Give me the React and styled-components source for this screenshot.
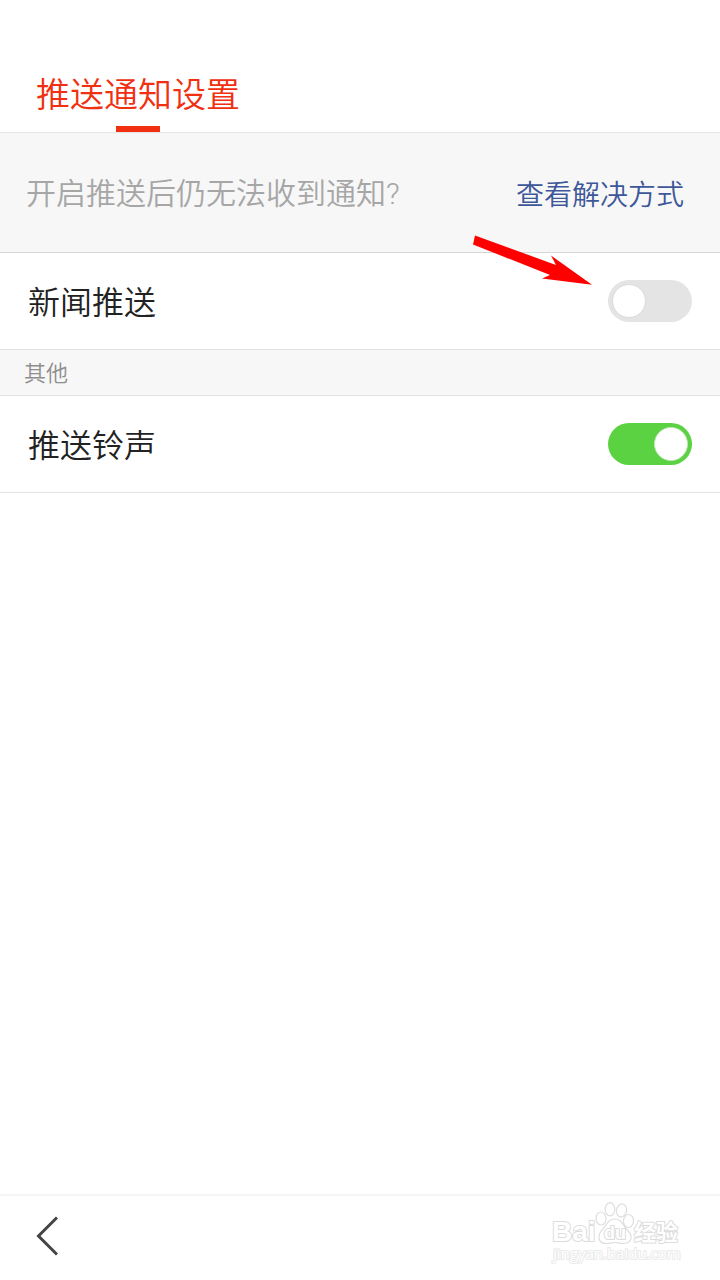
import React, { useState } from "react";
import styled, { createGlobalStyle } from "styled-components";

const App = () => {
  const [newsPush, setNewsPush] = useState(false);
  const [pushSound, setPushSound] = useState(true);

  return (
    <>
      <GlobalStyle />
      <StPage>
        <StHeader>
          <StTitle>推送通知设置</StTitle>
        </StHeader>
        <StMain>
          <StNotice>
            <StNoticeText>开启推送后仍无法收到通知?</StNoticeText>
            <StLink href="#help">查看解决方式</StLink>
          </StNotice>
          <StRow>
            <StLabel htmlFor="news-push">新闻推送</StLabel>
            <StSwitch
              id="news-push"
              type="checkbox"
              role="switch"
              checked={newsPush}
              onChange={(e) => setNewsPush(e.target.checked)}
            />
            <StArrow viewBox="0 0 120 50" aria-hidden="true">
              <path
                d="M3 -0.5L84 29L79 19.5L120 48.8L70 42.5L78 39L1 8.5Z"
                fill="#ff0000"
              />
            </StArrow>
          </StRow>
          <StSectionTitle>其他</StSectionTitle>
          <StRow>
            <StLabel htmlFor="push-sound">推送铃声</StLabel>
            <StSwitch
              id="push-sound"
              type="checkbox"
              role="switch"
              checked={pushSound}
              onChange={(e) => setPushSound(e.target.checked)}
            />
          </StRow>
        </StMain>
        <StFooter>
          <StBackButton type="button" aria-label="返回">
            <svg width="24" height="40" viewBox="0 0 24 40" fill="none">
              <path d="M23 1.5L4.5 20L23 38.5" stroke="#444" strokeWidth="3" />
            </svg>
          </StBackButton>
          <BaiduLogo />
        </StFooter>
      </StPage>
    </>
  );
};

const BaiduLogo = () => (
  <StLogo viewBox="0 0 132 68" role="img" aria-label="Baidu经验">
    <g fill="#fff" stroke="#dedede" strokeWidth="1.2">
      <ellipse cx="49" cy="16.5" rx="5" ry="6.5" transform="rotate(-4 49 16.5)" />
      <ellipse cx="58" cy="7.2" rx="4.8" ry="6.6" />
      <ellipse cx="69.5" cy="8.5" rx="5" ry="6.6" transform="rotate(12 69.5 8.5)" />
      <ellipse cx="76.5" cy="19" rx="5" ry="6.5" transform="rotate(4 76.5 19)" />
      <path d="M63 17C70 17 71 24 76 29C82 35 79 41.5 71 41.5C67 41.5 66 40.5 63 40.5C60 40.5 58 41.5 54 41.5C46 41.5 45 34 50 28C55 23 56 17 63 17Z" />
    </g>
    <StLogoText x="0" y="39" $size={28}>Bai</StLogoText>
    <StLogoText x="52" y="37" $size={18}>du</StLogoText>
    <StLogoText x="82" y="38" $size={22}>经验</StLogoText>
    <StLogoUrl x="1" y="57">jingyan.baidu.com</StLogoUrl>
  </StLogo>
);

const GlobalStyle = createGlobalStyle`
  *,
  *::before,
  *::after {
    box-sizing: border-box;
  }

  body {
    margin: 0;
    background-color: #fff;
    font-family: "Noto Sans CJK SC", sans-serif;
    font-weight: 350;
  }
`;

const StPage = styled.div`
  min-height: 100vh;
  display: flex;
  flex-direction: column;
`;

const StHeader = styled.header`
  display: flex;
  padding: 62px 36px 0;
  border-bottom: 1px solid #e4e4e4;
`;

const StTitle = styled.h1`
  display: flex;
  flex-direction: column;
  align-items: center;
  gap: 2px;
  margin: 0;
  color: #f03010;
  font-size: 34px;
  font-weight: 350;
  line-height: 62px;

  &::after {
    content: "";
    width: 44px;
    height: 6px;
    background-color: #f03010;
  }
`;

const StMain = styled.main`
  flex: 1;
`;

const StNotice = styled.div`
  display: flex;
  align-items: center;
  justify-content: space-between;
  height: 120px;
  padding: 0 36px 0 26px;
  border-bottom: 1px solid #d6d6d6;
  background-color: #f7f7f7;
`;

const StNoticeText = styled.p`
  margin: 0;
  padding-bottom: 4px;
  color: #a6a6a6;
  font-family: Roboto, "Noto Sans CJK SC", sans-serif;
  font-size: 30px;
`;

const StLink = styled.a`
  color: #3e5799;
  font-size: 28px;
  text-decoration: none;
`;

const StRow = styled.div`
  position: relative;
  display: flex;
  align-items: center;
  justify-content: space-between;
  height: 97px;
  padding: 0 28px;
  border-bottom: 1px solid #e2e2e2;
`;

const StLabel = styled.label`
  padding-bottom: 2px;
  color: #222;
  font-size: 32px;
`;

const StSwitch = styled.input`
  appearance: none;
  display: flex;
  align-items: center;
  justify-content: ${({ checked }) => (checked ? "flex-end" : "flex-start")};
  width: 84px;
  height: 42px;
  margin: 0;
  padding: 0 4px;
  border-radius: 21px;
  background-color: ${({ checked }) => (checked ? "#5ad242" : "#e4e4e4")};
  cursor: pointer;

  &::before {
    content: "";
    width: 34px;
    height: 34px;
    border: 1px solid ${({ checked }) => (checked ? "#c4e6bd" : "#dadada")};
    border-radius: 50%;
    background-color: #fff;
  }
`;

// 指向开关的箭头
const StArrow = styled.svg`
  position: absolute;
  top: -17px;
  right: 128px;
  width: 120px;
  height: 50px;
  overflow: visible;
  pointer-events: none;
`;

const StSectionTitle = styled.h2`
  margin: 0;
  padding: 0 24px 2px;
  border-bottom: 1px solid #e2e2e2;
  background-color: #f7f7f7;
  color: #8e8e8e;
  font-size: 22px;
  font-weight: 350;
  line-height: 43px;
`;

const StFooter = styled.footer`
  display: flex;
  align-items: center;
  justify-content: space-between;
  height: 86px;
  padding: 0 36px 4px 34px;
  border-top: 2px solid #f5f5f5;
`;

const StBackButton = styled.button`
  display: flex;
  padding: 0;
  border: none;
  background: none;
  cursor: pointer;
`;

const StLogo = styled.svg`
  width: 132px;
  height: 68px;
  overflow: visible;
`;

const StLogoText = styled.text`
  fill: #fff;
  stroke: #dcdcdc;
  stroke-width: 2px;
  stroke-linejoin: round;
  paint-order: stroke;
  font-family: "Liberation Sans", "Noto Sans CJK SC", sans-serif;
  font-size: ${({ $size }) => $size}px;
  font-weight: 700;
`;

const StLogoUrl = styled.text`
  fill: #fff;
  stroke: #eaeaea;
  stroke-width: 2px;
  stroke-linejoin: round;
  paint-order: stroke;
  font-family: "Open Sans", "Noto Sans", sans-serif;
  font-size: 15px;
  font-weight: 400;
`;

export default App;
